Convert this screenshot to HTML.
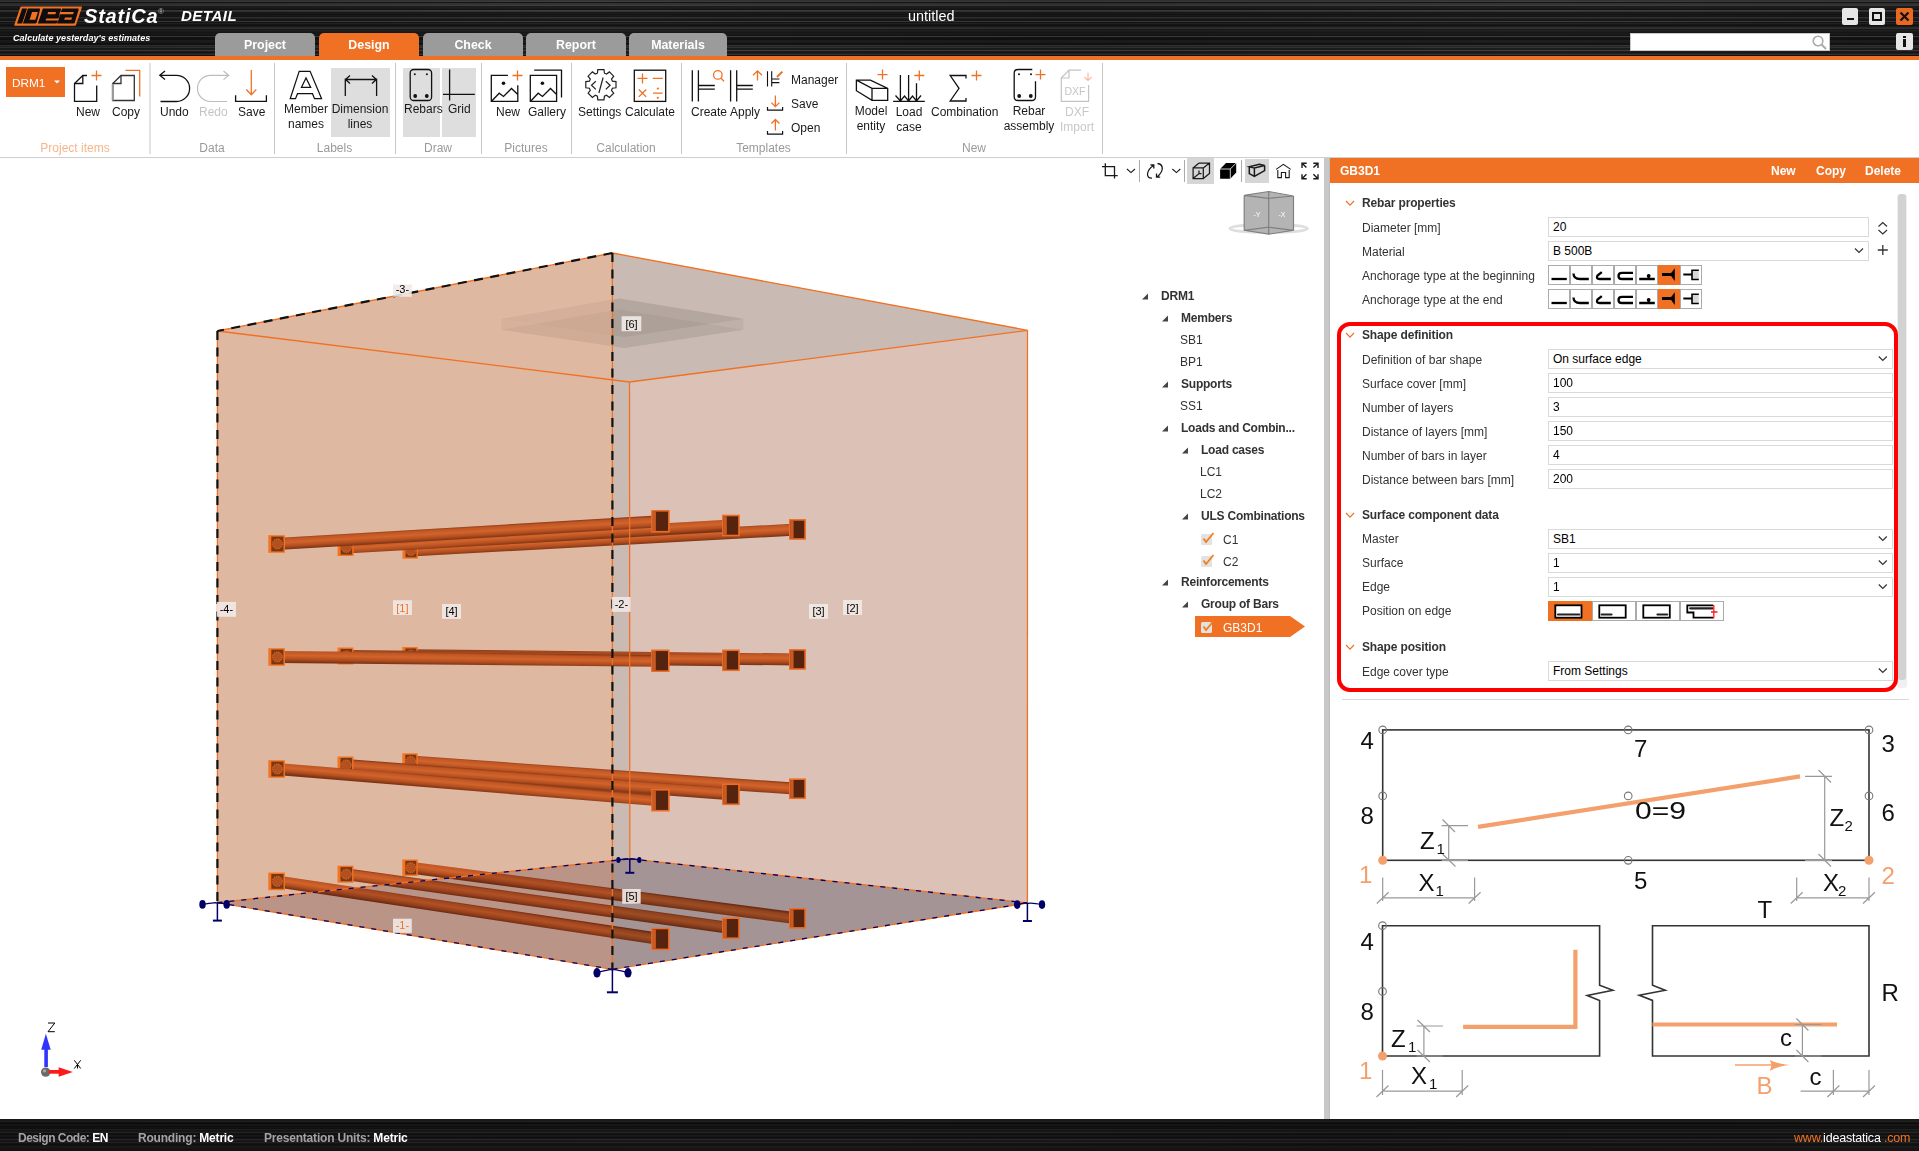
<!DOCTYPE html>
<html><head><meta charset="utf-8">
<style>
*{margin:0;padding:0;box-sizing:border-box}
html,body{width:1919px;height:1151px;overflow:hidden}
body{position:relative;background:#fff;font-family:"Liberation Sans",sans-serif;color:#000}
.a{position:absolute}
.brush{background-color:#1c1c1c}#title{background-image:linear-gradient(90deg,rgba(0,0,0,0.18),rgba(0,0,0,0) 30%,rgba(0,0,0,0.12) 55%,rgba(0,0,0,0) 80%,rgba(0,0,0,0.1)),linear-gradient(180deg,rgb(52,52,52) 0px,rgb(52,52,52) 1px,rgb(62,62,62) 1px,rgb(62,62,62) 2px,rgb(20,20,20) 2px,rgb(20,20,20) 3px,rgb(52,52,52) 3px,rgb(52,52,52) 4px,rgb(52,52,52) 4px,rgb(52,52,52) 5px,rgb(62,62,62) 5px,rgb(62,62,62) 6px,rgb(28,28,28) 6px,rgb(28,28,28) 7px,rgb(30,30,30) 7px,rgb(30,30,30) 8px,rgb(26,26,26) 8px,rgb(26,26,26) 9px,rgb(20,20,20) 9px,rgb(20,20,20) 10px,rgb(62,62,62) 10px,rgb(62,62,62) 11px,rgb(52,52,52) 11px,rgb(52,52,52) 12px,rgb(24,24,24) 12px,rgb(24,24,24) 13px,rgb(28,28,28) 13px,rgb(28,28,28) 14px,rgb(20,20,20) 14px,rgb(20,20,20) 15px,rgb(26,26,26) 15px,rgb(26,26,26) 16px,rgb(22,22,22) 16px,rgb(22,22,22) 17px,rgb(52,52,52) 17px,rgb(52,52,52) 18px,rgb(34,34,34) 18px,rgb(34,34,34) 19px,rgb(26,26,26) 19px,rgb(26,26,26) 20px,rgb(22,22,22) 20px,rgb(22,22,22) 21px,rgb(62,62,62) 21px,rgb(62,62,62) 22px,rgb(20,20,20) 22px,rgb(20,20,20) 23px,rgb(36,36,36) 23px,rgb(36,36,36) 24px,rgb(24,24,24) 24px,rgb(24,24,24) 25px,rgb(18,18,18) 25px,rgb(18,18,18) 26px,rgb(28,28,28) 26px,rgb(28,28,28) 27px,rgb(44,44,44) 27px,rgb(44,44,44) 28px,rgb(52,52,52) 28px,rgb(52,52,52) 29px,rgb(24,24,24) 29px,rgb(24,24,24) 30px,rgb(36,36,36) 30px,rgb(36,36,36) 31px,rgb(28,28,28) 31px,rgb(28,28,28) 32px,rgb(24,24,24) 32px,rgb(24,24,24) 33px,rgb(26,26,26) 33px,rgb(26,26,26) 34px,rgb(28,28,28) 34px,rgb(28,28,28) 35px,rgb(18,18,18) 35px,rgb(18,18,18) 36px,rgb(62,62,62) 36px,rgb(62,62,62) 37px,rgb(22,22,22) 37px,rgb(22,22,22) 38px,rgb(18,18,18) 38px,rgb(18,18,18) 39px,rgb(18,18,18) 39px,rgb(18,18,18) 40px,rgb(30,30,30) 40px,rgb(30,30,30) 41px,rgb(30,30,30) 41px,rgb(30,30,30) 42px,rgb(28,28,28) 42px,rgb(28,28,28) 43px,rgb(18,18,18) 43px,rgb(18,18,18) 44px,rgb(20,20,20) 44px,rgb(20,20,20) 45px,rgb(52,52,52) 45px,rgb(52,52,52) 46px,rgb(38,38,38) 46px,rgb(38,38,38) 47px,rgb(52,52,52) 47px,rgb(52,52,52) 48px,rgb(28,28,28) 48px,rgb(28,28,28) 49px,rgb(30,30,30) 49px,rgb(30,30,30) 50px,rgb(62,62,62) 50px,rgb(62,62,62) 51px,rgb(30,30,30) 51px,rgb(30,30,30) 52px,rgb(24,24,24) 52px,rgb(24,24,24) 53px,rgb(34,34,34) 53px,rgb(34,34,34) 54px,rgb(52,52,52) 54px,rgb(52,52,52) 55px,rgb(18,18,18) 55px,rgb(18,18,18) 56px)}#status{background-image:linear-gradient(90deg,rgba(0,0,0,0.1),rgba(0,0,0,0) 40%,rgba(0,0,0,0.1) 70%,rgba(0,0,0,0)),linear-gradient(180deg,rgb(26,26,26) 0px,rgb(26,26,26) 1px,rgb(28,28,28) 1px,rgb(28,28,28) 2px,rgb(32,32,32) 2px,rgb(32,32,32) 3px,rgb(18,18,18) 3px,rgb(18,18,18) 4px,rgb(12,12,12) 4px,rgb(12,12,12) 5px,rgb(22,22,22) 5px,rgb(22,22,22) 6px,rgb(24,24,24) 6px,rgb(24,24,24) 7px,rgb(12,12,12) 7px,rgb(12,12,12) 8px,rgb(20,20,20) 8px,rgb(20,20,20) 9px,rgb(16,16,16) 9px,rgb(16,16,16) 10px,rgb(32,32,32) 10px,rgb(32,32,32) 11px,rgb(22,22,22) 11px,rgb(22,22,22) 12px,rgb(24,24,24) 12px,rgb(24,24,24) 13px,rgb(38,38,38) 13px,rgb(38,38,38) 14px,rgb(18,18,18) 14px,rgb(18,18,18) 15px,rgb(16,16,16) 15px,rgb(16,16,16) 16px,rgb(26,26,26) 16px,rgb(26,26,26) 17px,rgb(24,24,24) 17px,rgb(24,24,24) 18px,rgb(12,12,12) 18px,rgb(12,12,12) 19px,rgb(24,24,24) 19px,rgb(24,24,24) 20px,rgb(38,38,38) 20px,rgb(38,38,38) 21px,rgb(28,28,28) 21px,rgb(28,28,28) 22px,rgb(20,20,20) 22px,rgb(20,20,20) 23px,rgb(38,38,38) 23px,rgb(38,38,38) 24px,rgb(20,20,20) 24px,rgb(20,20,20) 25px,rgb(16,16,16) 25px,rgb(16,16,16) 26px,rgb(20,20,20) 26px,rgb(20,20,20) 27px,rgb(26,26,26) 27px,rgb(26,26,26) 28px,rgb(26,26,26) 28px,rgb(26,26,26) 29px,rgb(22,22,22) 29px,rgb(22,22,22) 30px,rgb(20,20,20) 30px,rgb(20,20,20) 31px,rgb(20,20,20) 31px,rgb(20,20,20) 32px)}
#title{left:0;top:0;width:1919px;height:56px}
#obar{left:0;top:56px;width:1919px;height:4px;background:#f07124}
#ribbon{left:0;top:60px;width:1919px;height:97px;background:#fff}
#rbline{left:0;top:157px;width:1919px;height:1px;background:#cfcfcf}
#split{left:1324px;top:158px;width:6px;height:961px;background:#c8c8c8;border-right:1px solid #bdbdbd}
#status{left:0;top:1119px;width:1919px;height:32px}
.tab{top:33px;height:23px;width:100px;background:#9b9b9b;border-radius:5px 5px 0 0;color:#fff;font-weight:bold;font-size:12.4px;text-align:center;line-height:24px}
.rl{font-size:12px;color:#1a1a1a;white-space:nowrap;text-align:center;line-height:15px}
.gl{font-size:12px;color:#9a9a9a;white-space:nowrap;text-align:center;top:141px}
.sep{width:1px;background:#d0d0d0;top:63px;height:91px}
.pl{font-size:12px;color:#333;white-space:nowrap;left:1362px;line-height:14px}
.ph{font-size:12px;font-weight:bold;color:#333;white-space:nowrap;left:1362px;line-height:14px;letter-spacing:-0.15px}
.fld{left:1548px;height:20px;border:1px solid #d9d9d9;background:#fff;font-size:12px;color:#000;padding-left:4px;line-height:19px;white-space:nowrap}
.tr{font-size:12px;color:#333;white-space:nowrap;line-height:14px}
.trb{font-weight:bold;letter-spacing:-0.22px}
</style></head>
<body>
<div id="title" class="a brush"></div>
<div id="obar" class="a"></div>
<div id="ribbon" class="a"></div>
<div id="rbline" class="a"></div>
<div id="split" class="a"></div>
<div id="status" class="a brush"></div>
<svg class="a" style="left:0;top:0" width="90" height="30" viewBox="0 0 90 30">
<path d="M21.8 6.5 H81.3 Q82.2 6.5 81.9 7.4 L76 25 Q75.8 25.7 75 25.7 H14.9 Q14 25.7 14.3 24.8 L20.3 7.2 Q20.6 6.5 21.8 6.5 Z" fill="#f07124"/>
<g fill="#0d0d0d">
<path d="M22.1 8.6 H27.1 L22.1 23.4 H17.1 Z"/>
<path d="M27.9 8.6 H39.2 Q40.4 8.6 40 9.8 L36.9 22 Q36.5 23.4 35.2 23.4 H22.9 Z"/>
<path d="M42.9 8.6 H60.2 Q61.3 8.6 61 9.7 L57.4 22.2 Q57 23.4 55.8 23.4 H37.9 Z"/>
<path d="M62.1 8.6 H77.8 Q78.9 8.6 78.6 9.7 L74.9 22.2 Q74.5 23.4 73.3 23.4 H57.1 Z"/>
</g>
<g fill="#f07124">
<path d="M32.1 12.1 H37.9 L35.4 19.8 H29.6 Z"/>
<path d="M48.1 12.1 H56 L55.4 14.2 H47.5 Z"/>
<path d="M46.3 18.4 H59 L58.3 20.5 H45.6 Z"/>
<path d="M60 12.1 H73.8 L73.1 14.2 H59.3 Z"/>
<path d="M65 17.5 H72.1 L71.3 19.8 H64.2 Z"/>
</g>
</svg>
<div class="a" style="left:84px;top:4px;font-size:20px;font-weight:bold;font-style:italic;color:#fff;letter-spacing:0.8px;line-height:24px">StatiCa</div>
<div class="a" style="left:158px;top:8px;font-size:8px;color:#bbb;line-height:8px">&#174;</div>
<div class="a" style="left:181px;top:7px;font-size:15px;font-style:italic;font-weight:bold;color:#fff;line-height:18px;letter-spacing:0.5px">DETAIL</div>
<div class="a" style="left:13px;top:32px;font-size:9px;font-style:italic;font-weight:bold;color:#fff;line-height:12px;letter-spacing:0.05px">Calculate yesterday's estimates</div>
<div class="a" style="left:908px;top:8px;font-size:14.4px;color:#fff;line-height:17px">untitled</div>
<div class="a tab" style="left:215px">Project</div>
<div class="a tab" style="left:319px;background:#f07124">Design</div>
<div class="a tab" style="left:423px">Check</div>
<div class="a tab" style="left:526px">Report</div>
<div class="a tab" style="left:629px;width:98px">Materials</div>
<!-- window buttons -->
<div class="a" style="left:1842px;top:8px;width:16px;height:17px;background:#e6e6e6;border-radius:2px"></div>
<div class="a" style="left:1847px;top:18px;width:7px;height:2px;background:#111"></div>
<div class="a" style="left:1869px;top:8px;width:16px;height:17px;background:#e6e6e6;border-radius:2px"></div>
<div class="a" style="left:1872px;top:12px;width:10px;height:9px;border:2px solid #111"></div>
<div class="a" style="left:1896px;top:8px;width:17px;height:17px;background:#e8691f;border-radius:2px"></div>
<svg class="a" style="left:1896px;top:8px" width="17" height="17"><path d="M4.5 4.5 L12.5 12.5 M12.5 4.5 L4.5 12.5" stroke="#111" stroke-width="2.2"/></svg>
<div class="a" style="left:1630px;top:33px;width:200px;height:18px;background:#fff;border:1px solid #c8c8c8"></div>
<svg class="a" style="left:1811px;top:34px" width="18" height="17"><circle cx="7" cy="7" r="4.8" fill="none" stroke="#aaa" stroke-width="1.6"/><path d="M10.5 10.5 L15 15" stroke="#aaa" stroke-width="2"/></svg>
<div class="a" style="left:1896px;top:33px;width:17px;height:17px;background:#e6e6e6;border-radius:2px"></div>
<div class="a" style="left:1903px;top:36px;width:3px;height:2px;background:#111"></div>
<div class="a" style="left:1903px;top:39px;width:3px;height:8px;background:#111"></div>
<div class="a" style="left:331px;top:68px;width:59px;height:69px;background:#dedede"></div>
<div class="a" style="left:403px;top:68px;width:37px;height:69px;background:#dedede"></div>
<div class="a" style="left:442px;top:68px;width:34px;height:69px;background:#dedede"></div>
<div class="a" style="left:6px;top:67px;width:59px;height:30px;background:#f07124"></div>
<div class="a" style="left:12px;top:76px;font-size:11.8px;color:#fff;line-height:14px">DRM1</div>
<svg class="a" style="left:0;top:0" width="1110" height="160">
<g fill="none" stroke="#111" stroke-width="1.3">
<path d="M87 75.5 H82.8 L74.5 83.5 V101.4 H96.7 V85.5"/>
<path d="M82.8 75.5 V83.5 H74.5"/>
<path d="M112.8 83.5 L121 75.5 H134.3 V100.5 H112.8 Z" stroke="#333"/>
<path d="M121 75.5 V83.5 H112.8" stroke="#333"/>
<path d="M165 71 L159.8 75.3 L165 79.6 M159.8 75.3 H176.5 A13.1 13.1 0 0 1 176.5 101.5 H160.5"/>
<path d="M235.6 95.2 V101.4 H266.4 V95.2"/>
<path d="M290.2 98.7 L299.2 71.3 H310.1 L321.6 98.7 H314.5 L312.5 93.7 H297.5 L295.5 98.7 Z M301.4 87.4 L306 77.9 L310.7 87.4 Z" stroke-width="1.2"/>
<path d="M345.3 78.4 V95.9 M376.6 78.4 V95.9 M345.3 79.5 H376.6 M350 75.5 L345.5 79.5 L350 83.5 M372 75.5 L376.4 79.5 L372 83.5"/>
<rect x="410.2" y="69.5" width="21.4" height="31" rx="3.5"/>
<path d="M449.6 69.4 V100.5 M443 94.3 H474.8"/>
<path d="M507.9 75.4 H491.3 V101.4 H517.8 V85.2 M491.8 101 L499.2 93.2 L503.5 96.5 L511.5 88.5 L517.8 94.5"/>
<path d="M530.3 75.4 H556.6 V101.4 H530.3 Z M534.2 70.2 H561.5 V97.6 M530.8 101 L538.2 93.2 L542.5 96.5 L550.5 88.5 L556.6 94.5"/>
<rect x="634.3" y="70.2" width="31.4" height="31.2"/>
<path d="M692.3 70.2 V101.4 M698.4 70.2 V101.4 M698.4 85.5 H714.8 M698.4 89.1 H714.8"/>
<path d="M730.6 70.2 V101.4 M736.7 70.2 V101.4 M736.7 85.5 H752.8 M736.7 89.1 H752.8"/>
<path d="M767.5 71.3 V86.6 M771.7 71.3 V86.6 M771.7 79 H779.4 M771.7 82.6 H779.4" stroke-width="1.1"/>
<path d="M767.5 107 V110.2 H782.6 V107 M767.5 131 V134.2 H782.6 V131" stroke-width="1.2"/>
<path d="M856.4 80.1 H870.4 L887.7 88.3 V100.3 H872 L856.4 90.7 Z M856.4 80.1 L872 88.3 H887.7 M872 88.3 V100.3"/>
<path d="M893.1 101.4 H924.8 M900.4 75.1 V101 M908.6 75.1 V101 M916.5 83.3 V101 M895.5 95.5 L900.4 101 L904.5 96 L908.6 101 L912.5 96 L916.5 101 L921 95.5"/>
<path d="M966 78.5 V75.5 H950.2 L959 88.3 L950.2 101 H966 V98"/>
<path d="M1032.3 69.5 H1018 Q1014.2 69.5 1014.2 73.3 V96.7 Q1014.2 100.5 1018 100.5 H1031.7 Q1035.5 100.5 1035.5 96.7 V81.2"/>
</g>
<path d="M197.5 88.4 A13.1 13.1 0 0 1 210.5 75.3 H228.5 M223.5 71 L228.7 75.3 L223.5 79.6 M197.5 88.4 A13.1 13.1 0 0 0 210.5 101.5 H227" fill="none" stroke="#bdbdbd" stroke-width="1.2"/>
<path d="M112.8 84 V100.5" stroke="#999" stroke-width="2.2"/>
<g fill="#111"><circle cx="414.8" cy="74.3" r="1"/><circle cx="426.9" cy="74.3" r="1"/><circle cx="415.2" cy="96" r="1.9"/><circle cx="426.8" cy="96" r="1.9"/>
<circle cx="503.5" cy="83.3" r="1.8"/><circle cx="542.4" cy="83.3" r="1.8"/>
<circle cx="1019" cy="74.2" r="1"/><circle cx="1031" cy="74.2" r="1"/><circle cx="1019.2" cy="96" r="1.9"/><circle cx="1030.8" cy="96" r="1.9"/></g>
<g fill="none" stroke="#f07124" stroke-width="1.3">
<path d="M96.5 70.5 V80.5 M91.5 75.5 H101.5"/>
<path d="M125.4 70.3 H139.7 V96.4"/>
<path d="M251.3 70 V94.5 M246.3 89.5 L251.3 94.7 L256.3 89.5"/>
<path d="M517.5 70.5 V80.5 M512.5 75.5 H522.5"/>
<path d="M637.5 78.4 H647.5 M642.5 73.4 V83.4 M652.8 78.4 H662.8 M638.8 89.5 L646.2 96.9 M646.2 89.5 L638.8 96.9 M653 93.2 H662.6"/>
<circle cx="717.8" cy="74.9" r="4.3"/><path d="M720.8 78 L724 81.2"/>
<path d="M757.5 70.8 V80.6 M753 75.3 L757.5 70.8 L762 75.3"/>
<path d="M777 77 L782.3 71.6" stroke-width="2"/>
<path d="M775.4 95.4 V106.6 M771.4 102.6 L775.4 106.6 L779.4 102.6 M775.4 119.5 V130.5 M771.4 123.5 L775.4 119.5 L779.4 123.5"/>
<path d="M882.5 69.6 V79.6 M877.5 74.6 H887.5"/>
<path d="M919.3 70.5 V80.5 M914.3 75.5 H924.3"/>
<path d="M976.5 70.5 V80.5 M971.5 75.5 H981.5"/>
<path d="M1040.5 69.6 V79.6 M1035.5 74.6 H1045.5"/>
</g>
<g fill="#f07124"><circle cx="657.8" cy="88.6" r="1.1"/><circle cx="657.8" cy="97.8" r="1.1"/></g>
<path d="M1061.3 78 L1069 70.2 H1081 M1069 70.2 V78 H1061.3 V101.4 H1088.6 V85" fill="none" stroke="#c4c4c4" stroke-width="1.2"/>
<path d="M1088 72.5 V80.5 M1084.5 77 L1088 80.5 L1091.5 77" fill="none" stroke="#f7b998" stroke-width="1.1"/>
<text x="1064.5" y="94.5" font-family="Liberation Sans" font-size="11" fill="#c4c4c4" textLength="21" lengthAdjust="spacingAndGlyphs">DXF</text>
<g fill="none" stroke="#222" stroke-width="1.2">
<path d="M597.4 73.2 L597.8 69.6 L604.0 69.6 L604.4 73.2 L606.5 74.1 L609.4 71.9 L613.7 76.2 L611.5 79.1 L612.4 81.2 L616.0 81.6 L616.0 87.8 L612.4 88.2 L611.5 90.3 L613.7 93.2 L609.4 97.5 L606.5 95.3 L604.4 96.2 L604.0 99.8 L597.8 99.8 L597.4 96.2 L595.3 95.3 L592.4 97.5 L588.1 93.2 L590.3 90.3 L589.4 88.2 L585.8 87.8 L585.8 81.6 L589.4 81.2 L590.3 79.1 L588.1 76.2 L592.4 71.9 L595.3 74.1 Z"/>
<path d="M595.8 81.2 L591.5 85.3 L595.8 89.4 M605.8 81.2 L610.1 85.3 L605.8 89.4 M603.1 77.5 L598.9 93"/>
</g>
<g fill="#c6c6c6"><rect x="149.5" y="63" width="1" height="91"/><rect x="274" y="63" width="1" height="91"/><rect x="395" y="63" width="1" height="91"/><rect x="481" y="63" width="1" height="91"/><rect x="571" y="63" width="1" height="91"/><rect x="681" y="63" width="1" height="91"/><rect x="846" y="63" width="1" height="91"/><rect x="1102" y="63" width="1" height="91"/></g>
<path d="M54 80.5 L60 80.5 L57 83.5 Z" fill="#fff"/>
</svg>
<div class="a rl" style="left:76px;top:105px">New</div>
<div class="a rl" style="left:112px;top:105px">Copy</div>
<div class="a rl" style="left:160px;top:105px">Undo</div>
<div class="a rl" style="left:199px;top:105px;color:#c4c4c4">Redo</div>
<div class="a rl" style="left:238px;top:105px">Save</div>
<div class="a rl" style="left:276px;top:102px;width:60px">Member<br>names</div>
<div class="a rl" style="left:330px;top:102px;width:60px">Dimension<br>lines</div>
<div class="a rl" style="left:404px;top:102px">Rebars</div>
<div class="a rl" style="left:448px;top:102px">Grid</div>
<div class="a rl" style="left:496px;top:105px">New</div>
<div class="a rl" style="left:528px;top:105px">Gallery</div>
<div class="a rl" style="left:578px;top:105px">Settings</div>
<div class="a rl" style="left:625px;top:105px">Calculate</div>
<div class="a rl" style="left:691px;top:105px">Create</div>
<div class="a rl" style="left:730px;top:105px">Apply</div>
<div class="a rl" style="left:791px;top:73px">Manager</div>
<div class="a rl" style="left:791px;top:97px">Save</div>
<div class="a rl" style="left:791px;top:121px">Open</div>
<div class="a rl" style="left:846px;top:104px;width:50px">Model<br>entity</div>
<div class="a rl" style="left:889px;top:105px;width:40px">Load<br>case</div>
<div class="a rl" style="left:931px;top:105px">Combination</div>
<div class="a rl" style="left:999px;top:104px;width:60px">Rebar<br>assembly</div>
<div class="a rl" style="left:1057px;top:105px;width:40px;color:#c8c8c8">DXF<br>Import</div>
<div class="a gl" style="left:0;width:150px;color:#f5b58c">Project items</div>
<div class="a gl" style="left:150px;width:124px">Data</div>
<div class="a gl" style="left:274px;width:121px">Labels</div>
<div class="a gl" style="left:395px;width:86px">Draw</div>
<div class="a gl" style="left:481px;width:90px">Pictures</div>
<div class="a gl" style="left:571px;width:110px">Calculation</div>
<div class="a gl" style="left:681px;width:165px">Templates</div>
<div class="a gl" style="left:846px;width:256px">New</div>
<!--VIEW--><svg class="a" style="left:0;top:158px" width="1324" height="961" viewBox="0 158 1324 961">
<defs>
<linearGradient id="g0" gradientUnits="userSpaceOnUse" x1="468.9" y1="538.8" x2="468.2" y2="526.5">
<stop offset="0" stop-color="#7c3414"/><stop offset="0.25" stop-color="#b24e20"/><stop offset="0.55" stop-color="#d2642b"/><stop offset="0.85" stop-color="#c05624"/><stop offset="1" stop-color="#8c3c18"/></linearGradient>
<linearGradient id="g1" gradientUnits="userSpaceOnUse" x1="538.7" y1="542.7" x2="537.9" y2="530.3">
<stop offset="0" stop-color="#7c3414"/><stop offset="0.25" stop-color="#b24e20"/><stop offset="0.55" stop-color="#d2642b"/><stop offset="0.85" stop-color="#c05624"/><stop offset="1" stop-color="#8c3c18"/></linearGradient>
<linearGradient id="g2" gradientUnits="userSpaceOnUse" x1="604.2" y1="546.2" x2="603.5" y2="533.8">
<stop offset="0" stop-color="#7c3414"/><stop offset="0.25" stop-color="#b24e20"/><stop offset="0.55" stop-color="#d2642b"/><stop offset="0.85" stop-color="#c05624"/><stop offset="1" stop-color="#8c3c18"/></linearGradient>
<linearGradient id="g3" gradientUnits="userSpaceOnUse" x1="468.4" y1="665.1" x2="468.6" y2="652.7">
<stop offset="0" stop-color="#7c3414"/><stop offset="0.25" stop-color="#b24e20"/><stop offset="0.55" stop-color="#d2642b"/><stop offset="0.85" stop-color="#c05624"/><stop offset="1" stop-color="#8c3c18"/></linearGradient>
<linearGradient id="g4" gradientUnits="userSpaceOnUse" x1="538.2" y1="664.3" x2="538.3" y2="652.0">
<stop offset="0" stop-color="#7c3414"/><stop offset="0.25" stop-color="#b24e20"/><stop offset="0.55" stop-color="#d2642b"/><stop offset="0.85" stop-color="#c05624"/><stop offset="1" stop-color="#8c3c18"/></linearGradient>
<linearGradient id="g5" gradientUnits="userSpaceOnUse" x1="603.7" y1="663.5" x2="603.8" y2="651.2">
<stop offset="0" stop-color="#7c3414"/><stop offset="0.25" stop-color="#b24e20"/><stop offset="0.55" stop-color="#d2642b"/><stop offset="0.85" stop-color="#c05624"/><stop offset="1" stop-color="#8c3c18"/></linearGradient>
<linearGradient id="g6" gradientUnits="userSpaceOnUse" x1="468.0" y1="790.8" x2="469.1" y2="778.5">
<stop offset="0" stop-color="#7c3414"/><stop offset="0.25" stop-color="#b24e20"/><stop offset="0.55" stop-color="#d2642b"/><stop offset="0.85" stop-color="#c05624"/><stop offset="1" stop-color="#8c3c18"/></linearGradient>
<linearGradient id="g7" gradientUnits="userSpaceOnUse" x1="537.8" y1="785.8" x2="538.7" y2="773.5">
<stop offset="0" stop-color="#7c3414"/><stop offset="0.25" stop-color="#b24e20"/><stop offset="0.55" stop-color="#d2642b"/><stop offset="0.85" stop-color="#c05624"/><stop offset="1" stop-color="#8c3c18"/></linearGradient>
<linearGradient id="g8" gradientUnits="userSpaceOnUse" x1="603.3" y1="781.3" x2="604.2" y2="769.0">
<stop offset="0" stop-color="#7c3414"/><stop offset="0.25" stop-color="#b24e20"/><stop offset="0.55" stop-color="#d2642b"/><stop offset="0.85" stop-color="#c05624"/><stop offset="1" stop-color="#8c3c18"/></linearGradient>
<linearGradient id="g9" gradientUnits="userSpaceOnUse" x1="467.6" y1="916.3" x2="469.5" y2="904.1">
<stop offset="0" stop-color="#7c3414"/><stop offset="0.25" stop-color="#b24e20"/><stop offset="0.55" stop-color="#d2642b"/><stop offset="0.85" stop-color="#c05624"/><stop offset="1" stop-color="#8c3c18"/></linearGradient>
<linearGradient id="g10" gradientUnits="userSpaceOnUse" x1="537.4" y1="907.3" x2="539.1" y2="895.1">
<stop offset="0" stop-color="#7c3414"/><stop offset="0.25" stop-color="#b24e20"/><stop offset="0.55" stop-color="#d2642b"/><stop offset="0.85" stop-color="#c05624"/><stop offset="1" stop-color="#8c3c18"/></linearGradient>
<linearGradient id="g11" gradientUnits="userSpaceOnUse" x1="602.9" y1="899.2" x2="604.6" y2="886.9">
<stop offset="0" stop-color="#7c3414"/><stop offset="0.25" stop-color="#b24e20"/><stop offset="0.55" stop-color="#d2642b"/><stop offset="0.85" stop-color="#c05624"/><stop offset="1" stop-color="#8c3c18"/></linearGradient>
</defs>
<polygon points="217.4,331.0 612.4,253.0 612.4,969.3 217.4,902.6" fill="#dfb8a1"/>
<polygon points="612.4,253.0 1027.5,330.3 629.5,382.0 629.8,858.8 612.4,860.6" fill="#c9bbb3"/>
<polygon points="629.5,382.0 1027.5,330.3 1027.4,903.0 612.4,969.3 612.4,860.6 629.8,858.8" fill="#dcc1b6"/>
<clipPath id="cL"><rect x="0" y="158" width="612.4" height="961"/></clipPath><clipPath id="cR"><rect x="612.4" y="158" width="700" height="961"/></clipPath>
<g clip-path="url(#cL)"><polygon points="501.3,318.8 619.4,298.4 743.3,318.8 624.4,337.0" fill="rgba(90,60,50,0.07)"/><polygon points="501.3,329.8 619.4,309.4 743.3,329.8 624.4,348.0" fill="rgba(90,60,50,0.06)"/><polygon points="501.3,318.8 501.3,329.8 624.4,348.0 743.3,329.8 743.3,318.8 624.4,337.0" fill="rgba(90,60,50,0.05)"/></g>
<g clip-path="url(#cR)"><polygon points="501.3,318.8 619.4,298.4 743.3,318.8 624.4,337.0" fill="rgba(60,55,55,0.15)"/><polygon points="501.3,329.8 619.4,309.4 743.3,329.8 624.4,348.0" fill="rgba(60,55,55,0.06)"/><polygon points="501.3,318.8 501.3,329.8 624.4,348.0 743.3,329.8 743.3,318.8 624.4,337.0" fill="rgba(60,55,55,0.07)"/></g>
<polygon points="410.5,556.5 797.8,535.5 797.2,523.5 409.9,544.5" fill="url(#g2)"/>
<rect x="402.5" y="542.3" width="15.4" height="16.4" fill="#f47424"/><rect x="405.5" y="543.7" width="11.0" height="13.6" fill="#7a3812"/><circle cx="411.0" cy="550.5" r="5.0" fill="#b4501f" stroke="#f07a2a" stroke-width="0.9" stroke-dasharray="1.2 1.2"/>
<polygon points="345.9,553.5 731.3,531.5 730.7,519.5 345.3,541.5" fill="url(#g1)"/>
<rect x="337.6" y="539.0" width="16.0" height="17.0" fill="#f47424"/><rect x="340.6" y="540.4" width="11.6" height="14.2" fill="#7a3812"/><circle cx="346.4" cy="547.5" r="5.0" fill="#b4501f" stroke="#f07a2a" stroke-width="0.9" stroke-dasharray="1.2 1.2"/>
<polygon points="277.0,550.0 660.9,527.3 660.1,515.3 276.2,538.0" fill="url(#g0)"/>
<rect x="268.3" y="535.2" width="16.6" height="17.6" fill="#f47424"/><rect x="271.3" y="536.6" width="12.2" height="14.8" fill="#7a3812"/><circle cx="277.4" cy="544.0" r="5.0" fill="#b4501f" stroke="#f07a2a" stroke-width="0.9" stroke-dasharray="1.2 1.2"/>
<rect x="789.8" y="519.9" width="15.3" height="19.1" fill="#55230e" stroke="#ee6d26" stroke-width="1.6"/><rect x="790.6" y="520.8" width="3" height="17.5" fill="#c85a24"/>
<rect x="722.9" y="515.5" width="16.1" height="20.0" fill="#55230e" stroke="#ee6d26" stroke-width="1.6"/><rect x="723.8" y="516.3" width="3" height="18.4" fill="#c85a24"/>
<rect x="652.0" y="510.8" width="16.9" height="20.9" fill="#55230e" stroke="#ee6d26" stroke-width="1.6"/><rect x="652.9" y="511.6" width="3" height="19.3" fill="#c85a24"/>
<polygon points="409.9,661.2 797.4,665.5 797.6,653.5 410.1,649.2" fill="url(#g5)"/>
<rect x="402.3" y="647.0" width="15.4" height="16.4" fill="#f47424"/><rect x="405.3" y="648.4" width="11.0" height="13.6" fill="#7a3812"/><circle cx="410.8" cy="655.2" r="5.0" fill="#b4501f" stroke="#f07a2a" stroke-width="0.9" stroke-dasharray="1.2 1.2"/>
<polygon points="345.4,662.0 730.9,666.3 731.1,654.3 345.6,650.0" fill="url(#g4)"/>
<rect x="337.5" y="647.5" width="16.0" height="17.0" fill="#f47424"/><rect x="340.5" y="648.9" width="11.6" height="14.2" fill="#7a3812"/><circle cx="346.3" cy="656.0" r="5.0" fill="#b4501f" stroke="#f07a2a" stroke-width="0.9" stroke-dasharray="1.2 1.2"/>
<polygon points="276.5,663.0 660.3,666.8 660.5,654.8 276.7,651.0" fill="url(#g3)"/>
<rect x="268.3" y="648.2" width="16.6" height="17.6" fill="#f47424"/><rect x="271.3" y="649.6" width="12.2" height="14.8" fill="#7a3812"/><circle cx="277.4" cy="657.0" r="5.0" fill="#b4501f" stroke="#f07a2a" stroke-width="0.9" stroke-dasharray="1.2 1.2"/>
<rect x="789.8" y="649.9" width="15.3" height="19.1" fill="#55230e" stroke="#ee6d26" stroke-width="1.6"/><rect x="790.6" y="650.8" width="3" height="17.5" fill="#c85a24"/>
<rect x="722.9" y="650.3" width="16.1" height="20.0" fill="#55230e" stroke="#ee6d26" stroke-width="1.6"/><rect x="723.8" y="651.1" width="3" height="18.4" fill="#c85a24"/>
<rect x="651.9" y="650.3" width="16.9" height="20.9" fill="#55230e" stroke="#ee6d26" stroke-width="1.6"/><rect x="652.8" y="651.1" width="3" height="19.3" fill="#c85a24"/>
<polygon points="409.6,767.5 797.1,794.8 797.9,782.8 410.4,755.5" fill="url(#g8)"/>
<rect x="402.3" y="753.3" width="15.4" height="16.4" fill="#f47424"/><rect x="405.3" y="754.7" width="11.0" height="13.6" fill="#7a3812"/><circle cx="410.8" cy="761.5" r="5.0" fill="#b4501f" stroke="#f07a2a" stroke-width="0.9" stroke-dasharray="1.2 1.2"/>
<polygon points="345.0,771.0 730.5,800.3 731.5,788.3 346.0,759.0" fill="url(#g7)"/>
<rect x="337.5" y="756.5" width="16.0" height="17.0" fill="#f47424"/><rect x="340.5" y="757.9" width="11.6" height="14.2" fill="#7a3812"/><circle cx="346.3" cy="765.0" r="5.0" fill="#b4501f" stroke="#f07a2a" stroke-width="0.9" stroke-dasharray="1.2 1.2"/>
<polygon points="276.1,775.0 660.0,806.3 661.0,794.3 277.1,763.0" fill="url(#g6)"/>
<rect x="268.3" y="760.2" width="16.6" height="17.6" fill="#f47424"/><rect x="271.3" y="761.6" width="12.2" height="14.8" fill="#7a3812"/><circle cx="277.4" cy="769.0" r="5.0" fill="#b4501f" stroke="#f07a2a" stroke-width="0.9" stroke-dasharray="1.2 1.2"/>
<rect x="789.8" y="779.2" width="15.3" height="19.1" fill="#55230e" stroke="#ee6d26" stroke-width="1.6"/><rect x="790.6" y="780.0" width="3" height="17.5" fill="#c85a24"/>
<rect x="722.9" y="784.3" width="16.1" height="20.0" fill="#55230e" stroke="#ee6d26" stroke-width="1.6"/><rect x="723.8" y="785.1" width="3" height="18.4" fill="#c85a24"/>
<rect x="652.0" y="789.8" width="16.9" height="20.9" fill="#55230e" stroke="#ee6d26" stroke-width="1.6"/><rect x="652.9" y="790.6" width="3" height="19.3" fill="#c85a24"/>
<polygon points="409.2,873.6 796.7,924.3 798.3,912.5 410.8,861.8" fill="url(#g11)"/>
<polygon points="344.7,880.1 730.2,934.1 731.8,922.3 346.3,868.3" fill="url(#g10)"/>
<polygon points="275.7,887.3 659.6,944.9 661.4,933.1 277.5,875.5" fill="url(#g9)"/>
<polygon points="217.4,902.6 612.4,860.6 612.4,969.3" fill="#d6cdd8" style="mix-blend-mode:multiply"/>
<polygon points="612.4,860.6 629.8,858.8 1027.4,903.0 612.4,969.3" fill="#bfc3d2" style="mix-blend-mode:multiply"/>
<rect x="402.3" y="859.5" width="15.4" height="16.4" fill="#f47424"/><rect x="405.3" y="860.9" width="11.0" height="13.6" fill="#7a3812"/><circle cx="410.8" cy="867.7" r="5.0" fill="#b4501f" stroke="#f07a2a" stroke-width="0.9" stroke-dasharray="1.2 1.2"/>
<rect x="337.5" y="865.7" width="16.0" height="17.0" fill="#f47424"/><rect x="340.5" y="867.1" width="11.6" height="14.2" fill="#7a3812"/><circle cx="346.3" cy="874.2" r="5.0" fill="#b4501f" stroke="#f07a2a" stroke-width="0.9" stroke-dasharray="1.2 1.2"/>
<rect x="268.3" y="872.6" width="16.6" height="17.6" fill="#f47424"/><rect x="271.3" y="874.0" width="12.2" height="14.8" fill="#7a3812"/><circle cx="277.4" cy="881.4" r="5.0" fill="#b4501f" stroke="#f07a2a" stroke-width="0.9" stroke-dasharray="1.2 1.2"/>
<rect x="789.8" y="908.8" width="15.3" height="19.1" fill="#55230e" stroke="#ee6d26" stroke-width="1.6"/><rect x="790.6" y="909.6" width="3" height="17.5" fill="#c85a24"/>
<rect x="722.9" y="918.2" width="16.1" height="20.0" fill="#55230e" stroke="#ee6d26" stroke-width="1.6"/><rect x="723.8" y="919.0" width="3" height="18.4" fill="#c85a24"/>
<rect x="652.0" y="928.5" width="16.9" height="20.9" fill="#55230e" stroke="#ee6d26" stroke-width="1.6"/><rect x="652.9" y="929.4" width="3" height="19.3" fill="#c85a24"/>
<g fill="none" stroke="#f07124" stroke-width="1.3">
<line x1="217.4" y1="331.0" x2="612.4" y2="253.0"/>
<line x1="612.4" y1="253.0" x2="1027.5" y2="330.3"/>
<line x1="217.4" y1="331.0" x2="629.5" y2="382.0"/>
<line x1="629.5" y1="382.0" x2="1027.5" y2="330.3"/>
<line x1="217.4" y1="331.0" x2="217.4" y2="902.6"/>
<line x1="612.4" y1="253.0" x2="612.4" y2="969.3"/>
<line x1="1027.5" y1="330.3" x2="1027.4" y2="903.0"/>
<line x1="629.5" y1="382.0" x2="629.8" y2="858.8"/>
<line x1="217.4" y1="902.6" x2="612.4" y2="969.3"/>
<line x1="612.4" y1="969.3" x2="1027.4" y2="903.0"/>
<line x1="217.4" y1="902.6" x2="629.8" y2="858.8"/>
<line x1="629.8" y1="858.8" x2="1027.4" y2="903.0"/>
</g>
<g fill="none" stroke="#111" stroke-width="2.2" stroke-dasharray="9 7.5">
<line x1="612.4" y1="253.0" x2="217.4" y2="331.0"/>
<line x1="612.4" y1="253.0" x2="612.4" y2="969.3"/>
<line x1="217.4" y1="331.0" x2="217.4" y2="902.6"/>
</g>
<g fill="none" stroke="#000066" stroke-width="1.3" stroke-dasharray="5 7">
<line x1="217.4" y1="902.6" x2="612.4" y2="969.3"/>
<line x1="612.4" y1="969.3" x2="1027.4" y2="903.0"/>
<line x1="217.4" y1="902.6" x2="629.8" y2="858.8"/>
<line x1="629.8" y1="858.8" x2="1027.4" y2="903.0"/>
</g>
<g fill="#000066" stroke="#000066"><line x1="217.4" y1="902.6" x2="217.4" y2="920.6" stroke-width="1.5"/><line x1="212.9" y1="920.6" x2="221.9" y2="920.6" stroke-width="2"/><path d="M202.5 904.4 Q217.4 901.6 217.4 903.6" fill="none" stroke-width="1.3"/><path d="M226.7 904.4 Q217.4 901.6 217.4 903.6" fill="none" stroke-width="1.3"/><ellipse cx="202.5" cy="904.4" rx="3.2" ry="4.3" stroke="none"/><ellipse cx="226.7" cy="904.4" rx="3.2" ry="4.3" stroke="none"/></g>
<g fill="#000066" stroke="#000066"><line x1="612.4" y1="969.3" x2="612.4" y2="992.3" stroke-width="1.5"/><line x1="606.9" y1="992.3" x2="617.9" y2="992.3" stroke-width="2"/><path d="M597.0 972.8 Q612.4 968.3 612.4 970.3" fill="none" stroke-width="1.3"/><path d="M628.0 972.8 Q612.4 968.3 612.4 970.3" fill="none" stroke-width="1.3"/><ellipse cx="597.0" cy="972.8" rx="3.6" ry="4.8" stroke="none"/><ellipse cx="628.0" cy="972.8" rx="3.6" ry="4.8" stroke="none"/></g>
<g fill="#000066" stroke="#000066"><line x1="1027.4" y1="903.0" x2="1027.4" y2="921.0" stroke-width="1.5"/><line x1="1022.9" y1="921.0" x2="1031.9" y2="921.0" stroke-width="2"/><path d="M1017.2 904.6 Q1027.4 902.0 1027.4 904.0" fill="none" stroke-width="1.3"/><path d="M1042.0 904.6 Q1027.4 902.0 1027.4 904.0" fill="none" stroke-width="1.3"/><ellipse cx="1017.2" cy="904.6" rx="3.2" ry="4.3" stroke="none"/><ellipse cx="1042.0" cy="904.6" rx="3.2" ry="4.3" stroke="none"/></g>
<g fill="#000066" stroke="#000066"><line x1="629.8" y1="858.8" x2="629.8" y2="872.8" stroke-width="1.5"/><line x1="625.3" y1="872.8" x2="634.3" y2="872.8" stroke-width="2"/><path d="M618.4 860.0 Q629.8 857.8 629.8 859.8" fill="none" stroke-width="1.3"/><path d="M639.3 860.0 Q629.8 857.8 629.8 859.8" fill="none" stroke-width="1.3"/><ellipse cx="618.4" cy="860.0" rx="2.2" ry="3.0" stroke="none"/><ellipse cx="639.3" cy="860.0" rx="2.2" ry="3.0" stroke="none"/></g>
<rect x="393.0" y="284.5" width="18.8" height="12.3" fill="#f1e9e5" fill-opacity="0.9"/><text x="402.4" y="293.3" font-family="Liberation Sans" font-size="11" fill="#000" text-anchor="middle">-3-</text>
<rect x="621.6" y="316.2" width="19.7" height="15.0" fill="#f1e9e5" fill-opacity="0.9"/><text x="631.5" y="327.7" font-family="Liberation Sans" font-size="11" fill="#000" text-anchor="middle">[6]</text>
<rect x="216.8" y="601.9" width="19.2" height="14.9" fill="#f1e9e5" fill-opacity="0.9"/><text x="226.4" y="613.3" font-family="Liberation Sans" font-size="11" fill="#000" text-anchor="middle">-4-</text>
<rect x="393.0" y="600.2" width="18.9" height="14.8" fill="#f1e9e5" fill-opacity="0.9"/><text x="402.4" y="611.5" font-family="Liberation Sans" font-size="11" fill="#f07124" text-anchor="middle">[1]</text>
<rect x="442.0" y="604.0" width="19.0" height="14.9" fill="#f1e9e5" fill-opacity="0.9"/><text x="451.5" y="615.4" font-family="Liberation Sans" font-size="11" fill="#000" text-anchor="middle">[4]</text>
<rect x="612.0" y="597.0" width="18.7" height="14.8" fill="#f1e9e5" fill-opacity="0.9"/><text x="621.4" y="608.3" font-family="Liberation Sans" font-size="11" fill="#000" text-anchor="middle">-2-</text>
<rect x="809.0" y="604.0" width="19.0" height="14.8" fill="#f1e9e5" fill-opacity="0.9"/><text x="818.5" y="615.3" font-family="Liberation Sans" font-size="11" fill="#000" text-anchor="middle">[3]</text>
<rect x="843.0" y="600.0" width="19.0" height="15.0" fill="#f1e9e5" fill-opacity="0.9"/><text x="852.5" y="611.5" font-family="Liberation Sans" font-size="11" fill="#000" text-anchor="middle">[2]</text>
<rect x="622.2" y="889.0" width="18.5" height="14.7" fill="#f1e9e5" fill-opacity="0.9"/><text x="631.5" y="900.2" font-family="Liberation Sans" font-size="11" fill="#000" text-anchor="middle">[5]</text>
<rect x="393.0" y="918.7" width="18.8" height="14.2" fill="#f1e9e5" fill-opacity="0.9"/><text x="402.4" y="929.4" font-family="Liberation Sans" font-size="11" fill="#f07124" text-anchor="middle">-1-</text>
<circle cx="45.7" cy="1072.1" r="4.7" fill="#6a6a6a"/><circle cx="44.5" cy="1070.8" r="1.6" fill="#aaa"/>
<rect x="44.3" y="1049" width="3.6" height="18" fill="#3333ff"/><polygon points="41.2,1049.7 50.7,1049.7 45.9,1033.8" fill="#3333ff"/>
<rect x="49" y="1070" width="10" height="3.7" fill="#ff1a1a"/><polygon points="58.6,1067.3 72.9,1072.1 58.6,1076.7" fill="#ff1a1a"/>
<path d="M48 1023 H54.8 L48 1031.7 H54.8" fill="none" stroke="#000" stroke-width="1"/>
<path d="M74.3 1060.3 L80.7 1068.5 M80.7 1060.3 L74.3 1068.5 M77.5 1064 V1068.5" fill="none" stroke="#000" stroke-width="1"/>
</svg><!--/VIEW-->
<div class="a" style="left:1187px;top:158px;width:27px;height:26px;background:#d6d6d6"></div>
<div class="a" style="left:1245px;top:159px;width:24px;height:24px;background:#d6d6d6"></div>
<svg class="a" style="left:1090px;top:158px" width="234" height="90" viewBox="1090 158 234 90">
<g fill="none" stroke="#1a1a1a" stroke-width="1.3">
<path d="M1105.3 163.2 V175.7 H1117.7 M1102 166.6 H1114.5 V178.5"/>
<path d="M1127 169 L1131 172.6 L1134.9 169 M1172.4 169 L1176.4 172.6 L1180.3 169" stroke-width="1.1"/>
<path d="M1153.5 165.5 Q1148 169 1147.5 174 Q1147.5 178.5 1152 178.2 M1150.5 165 H1153.8 V168.5"/>
<path d="M1157.5 163.5 Q1162.5 164 1162.3 169 Q1161.5 173.5 1157 177 M1160.2 177.2 H1156.5 V173.5"/>
<path d="M1193.1 167.9 H1203.3 V178.5 H1193.1 Z M1199 163 H1209.5 V173.5 L1203.3 178.5 M1193.1 167.9 L1199 163 M1203.3 167.9 L1209.5 163 M1193.1 178.5 L1199 173.5 H1201.5 M1199 173.5 V170.5" stroke-width="1.25"/>
<path d="M1249.3 166.7 L1254.4 168.1 L1264.6 165.6 L1259.3 164.2 Z M1249.3 166.7 V173.6 L1254.4 176.5 L1264.6 170.6 V165.6 M1254.4 168.1 V176.5" stroke-width="1.5"/>
<path d="M1276.1 169.4 L1283.4 164.3 L1290.7 169.4 M1277.8 170 V177.6 H1281.4 V172.5 H1285.6 V177.6 H1289.2 V170" stroke-width="1.1"/>
<path d="M1306.4 167.6 L1302.3 163.5 M1302 167.9 V163.2 H1306.7 M1313.4 167.6 L1317.7 163.5 M1313.3 163.2 H1318 V167.9 M1306.4 174.3 L1302.3 178.4 M1302 174.2 V178.7 H1306.7 M1313.4 174.3 L1317.7 178.4 M1318 174.2 V178.7 H1313.3" stroke-width="1.4"/>
</g>
<path d="M1220.1 169 L1226 163 H1236.2 V172.5 L1230.3 178.8 H1220.1 Z" fill="#000"/>
<path d="M1220.1 169 H1230.3 V178.8 M1230.3 169 L1236.2 163" stroke="#fff" stroke-width="0.8" fill="none"/>
<rect x="1139" y="160" width="1" height="22" fill="#aaa"/><rect x="1184" y="160" width="1" height="22" fill="#aaa"/><rect x="1241" y="160" width="1" height="22" fill="#aaa"/>
<ellipse cx="1268.7" cy="228.5" rx="39" ry="4" fill="none" stroke="#dedede" stroke-width="2.5"/>
<polygon points="1244.2,195.4 1268.7,191.5 1293.5,196 1293.5,230.3 1268.7,234.2 1244.2,230.3" fill="#b4b4b4"/>
<g fill="none" stroke="#808080" stroke-width="1.2">
<path d="M1244.2 195.4 L1268.7 191.5 L1293.5 196 L1268.7 198.3 Z M1244.2 195.4 V230.3 L1268.7 234.2 L1293.5 230.3 V196 M1268.7 191.5 V234.2 M1244.2 230.3 L1268.7 227.2 L1293.5 230.3"/>
</g>
<text x="1257" y="217" font-family="Liberation Sans" font-size="7" fill="#fff" text-anchor="middle">-Y</text>
<text x="1282" y="217" font-family="Liberation Sans" font-size="7" fill="#fff" text-anchor="middle">-X</text>
</svg>
<svg class="a" style="left:1130px;top:280px" width="190" height="370" viewBox="1130 280 190 370">
<g fill="#444"><polygon points="1142,299.5 1148,299.5 1148,293.5"/><polygon points="1162,321.5 1168,321.5 1168,315.5"/><polygon points="1162,387.5 1168,387.5 1168,381.5"/><polygon points="1162,431.5 1168,431.5 1168,425.5"/><polygon points="1182,453.5 1188,453.5 1188,447.5"/><polygon points="1182,519.5 1188,519.5 1188,513.5"/><polygon points="1162,585.5 1168,585.5 1168,579.5"/><polygon points="1182,607.5 1188,607.5 1188,601.5"/></g>
<polygon points="1195,616 1290,616 1305,626.5 1290,637 1195,637" fill="#f07124"/>
<rect x="1201" y="534" width="11" height="11" rx="1.5" fill="#e2e2e2"/><rect x="1201" y="556" width="11" height="11" rx="1.5" fill="#e2e2e2"/><rect x="1201" y="622" width="11" height="11" rx="1.5" fill="#e2e2e2"/>
<path d="M1203.5 538.5 L1206 542 L1213.5 533 M1203.5 560.5 L1206 564 L1213.5 555 M1203.5 626.5 L1206 630 L1213.5 621" fill="none" stroke="#f47d16" stroke-width="1.8"/>
</svg>
<div class="a tr trb" style="left:1161px;top:289px">DRM1</div>
<div class="a tr trb" style="left:1181px;top:311px">Members</div>
<div class="a tr" style="left:1180px;top:333px">SB1</div>
<div class="a tr" style="left:1180px;top:355px">BP1</div>
<div class="a tr trb" style="left:1181px;top:377px">Supports</div>
<div class="a tr" style="left:1180px;top:399px">SS1</div>
<div class="a tr trb" style="left:1181px;top:421px">Loads and Combin...</div>
<div class="a tr trb" style="left:1201px;top:443px">Load cases</div>
<div class="a tr" style="left:1200px;top:465px">LC1</div>
<div class="a tr" style="left:1200px;top:487px">LC2</div>
<div class="a tr trb" style="left:1201px;top:509px">ULS Combinations</div>
<div class="a tr" style="left:1223px;top:533px">C1</div>
<div class="a tr" style="left:1223px;top:555px">C2</div>
<div class="a tr trb" style="left:1181px;top:575px">Reinforcements</div>
<div class="a tr trb" style="left:1201px;top:597px">Group of Bars</div>
<div class="a tr" style="left:1223px;top:621px;color:#fff">GB3D1</div>
<div class="a" style="left:1330px;top:158px;width:589px;height:25px;background:#f07124"></div>
<div class="a" style="left:1340px;top:164px;font-size:12px;font-weight:bold;color:#fff;line-height:14px">GB3D1</div>
<div class="a" style="left:1771px;top:164px;font-size:12px;font-weight:bold;color:#fff;line-height:14px">New</div>
<div class="a" style="left:1816px;top:164px;font-size:12px;font-weight:bold;color:#fff;line-height:14px">Copy</div>
<div class="a" style="left:1865px;top:164px;font-size:12px;font-weight:bold;color:#fff;line-height:14px">Delete</div>
<div class="a" style="left:1897px;top:194px;width:10px;height:494px;background:#f0f0f0;border-radius:3px"></div><div class="a" style="left:1898px;top:194px;width:8px;height:486px;background:#d2d2d2;border-radius:3px"></div>
<div class="a" style="left:1342px;top:699px;width:567px;height:1px;background:#d8d8d8"></div>
<div class="a" style="left:1337px;top:322px;width:561px;height:370px;border:4px solid #ff0000;border-radius:13px"></div>
<svg class="a" style="left:1330px;top:190px" width="30" height="470" viewBox="1330 190 30 470">
<g fill="none" stroke="#f07124" stroke-width="1.2"><path d="M1346 201 L1350 205.2 L1354 201"/><path d="M1346 333 L1350 337.2 L1354 333"/><path d="M1346 513 L1350 517.2 L1354 513"/><path d="M1346 645 L1350 649.2 L1354 645"/></g>
</svg>
<div class="a ph" style="top:196px">Rebar properties</div>
<div class="a pl" style="top:221px">Diameter [mm]</div>
<div class="a pl" style="top:245px">Material</div>
<div class="a pl" style="top:269px">Anchorage type at the beginning</div>
<div class="a pl" style="top:293px">Anchorage type at the end</div>
<div class="a ph" style="top:328px">Shape definition</div>
<div class="a pl" style="top:353px">Definition of bar shape</div>
<div class="a pl" style="top:377px">Surface cover [mm]</div>
<div class="a pl" style="top:401px">Number of layers</div>
<div class="a pl" style="top:425px">Distance of layers [mm]</div>
<div class="a pl" style="top:449px">Number of bars in layer</div>
<div class="a pl" style="top:473px">Distance between bars [mm]</div>
<div class="a ph" style="top:508px">Surface component data</div>
<div class="a pl" style="top:532px">Master</div>
<div class="a pl" style="top:556px">Surface</div>
<div class="a pl" style="top:580px">Edge</div>
<div class="a pl" style="top:604px">Position on edge</div>
<div class="a ph" style="top:640px">Shape position</div>
<div class="a pl" style="top:665px">Edge cover type</div>
<div class="a fld" style="top:217px;width:321px">20</div>
<div class="a fld" style="top:241px;width:321px">B 500B</div>
<div class="a fld" style="top:349px;width:345px">On surface edge</div>
<div class="a fld" style="top:373px;width:345px">100</div>
<div class="a fld" style="top:397px;width:345px">3</div>
<div class="a fld" style="top:421px;width:345px">150</div>
<div class="a fld" style="top:445px;width:345px">4</div>
<div class="a fld" style="top:469px;width:345px">200</div>
<div class="a fld" style="top:529px;width:345px">SB1</div>
<div class="a fld" style="top:553px;width:345px">1</div>
<div class="a fld" style="top:577px;width:345px">1</div>
<div class="a fld" style="top:661px;width:345px">From Settings</div>
<svg class="a" style="left:1540px;top:210px" width="360" height="480" viewBox="1540 210 360 480">
<g fill="none" stroke="#333" stroke-width="1.2">
<path d="M1855 248.5 L1859 252.5 L1863 248.5"/>
<path d="M1878.5 226.5 L1882.8 222.5 L1887 226.5 M1878.5 230 L1882.8 234 L1887 230"/>
<path d="M1882.8 245 V255 M1877.8 250 H1887.8" stroke-width="1.3"/>
<path d="M1878.8 356.5 L1882.8 360.5 L1886.8 356.5 M1878.8 536.5 L1882.8 540.5 L1886.8 536.5 M1878.8 560.5 L1882.8 564.5 L1886.8 560.5 M1878.8 584.5 L1882.8 588.5 L1886.8 584.5 M1878.8 668.5 L1882.8 672.5 L1886.8 668.5"/>
</g>
<g id="anc">
<rect x="1548.5" y="265.5" width="21" height="19" fill="#fff" stroke="#ababab"/>
<rect x="1570.5" y="265.5" width="21" height="19" fill="#fff" stroke="#ababab"/>
<rect x="1592.5" y="265.5" width="21" height="19" fill="#fff" stroke="#ababab"/>
<rect x="1614.5" y="265.5" width="21" height="19" fill="#fff" stroke="#ababab"/>
<rect x="1636.5" y="265.5" width="21" height="19" fill="#fff" stroke="#ababab"/>
<rect x="1658" y="265" width="22" height="20" fill="#f07124"/>
<rect x="1680.5" y="265.5" width="21" height="19" fill="#fff" stroke="#ababab"/>
<g fill="none" stroke="#000" stroke-width="2.3">
<path d="M1551.5 279 H1566.8"/>
<path d="M1573.5 273.5 Q1573.5 279 1580 279 H1588.8"/>
<path d="M1601.8 272.2 L1597.5 275.5 Q1595.8 279 1599.5 279 H1610.8"/>
<path d="M1633 272.8 H1622 Q1618.5 272.8 1618.5 275.9 Q1618.5 279 1622 279 H1633"/>
<path d="M1639.2 279 H1654.8 M1648.7 276 V279"/>
<path d="M1662 274.5 H1672" stroke-width="3"/>
<path d="M1683.3 274.5 H1692" stroke-width="2"/>
</g>
<circle cx="1648.7" cy="275.8" r="1.9" fill="#000"/>
<path d="M1670 274.5 L1674.8 268.2 V281 Z" fill="#000"/>
<path d="M1698.8 270.3 H1692 V279.5 H1698.8" fill="#d8d8d8" stroke="#000" stroke-width="1.6"/>
</g>
<use href="#anc" y="24"/>
<rect x="1548" y="601" width="44.5" height="20" fill="#f07124"/>
<rect x="1592.5" y="601.5" width="43" height="19" fill="#fff" stroke="#ababab"/>
<rect x="1636.5" y="601.5" width="43" height="19" fill="#fff" stroke="#ababab"/>
<rect x="1680.5" y="601.5" width="43" height="19" fill="#fff" stroke="#ababab"/>
<g fill="none" stroke="#000" stroke-width="1.8">
<rect x="1555.3" y="605.3" width="26.2" height="12.4" fill="#fff"/>
<rect x="1599.3" y="605.3" width="26.4" height="12.4"/>
<rect x="1643.3" y="605.3" width="26.5" height="12.4"/>
<path d="M1713.3 605.3 H1687.3 V612.5 H1693.5 V617.7 H1713.3"/>
</g>
<g stroke="#222" stroke-width="2.2" stroke-linecap="round"><path d="M1558 614.5 H1579.2 M1601.7 614.5 H1611.5 M1657.5 614.5 H1667.2 M1690.2 608.3 H1712.5"/></g>
<path d="M1713.8 605 V618.5 M1711 612 H1717.5" stroke="#ff1a1a" stroke-width="1.3"/>
</svg>
<svg class="a" style="left:1330px;top:705px" width="589" height="414" viewBox="1330 705 589 414">
<g fill="none" stroke="#333" stroke-width="1.6">
<rect x="1382.7" y="729.9" width="486.3" height="130.4"/>
<path d="M1382.5 925.7 H1599.6 V985.3 L1612.8 990.3 L1587.2 995.4 L1599.6 1000.5 V1056 H1382.5 Z"/>
<path d="M1652.5 925.7 H1869 V1056 H1652.5 V1000.4 L1639.2 995.3 L1665.2 990.2 L1652.5 985.3 Z"/>
</g>
<g fill="none" stroke="#f4a06c" stroke-width="4.2">
<path d="M1478 826.9 L1800 776.4"/>
<path d="M1463.1 1026.8 H1575.4 V949.7"/>
<path d="M1652.5 1024.5 H1837"/>
</g>
<g fill="none" stroke="#999" stroke-width="1.2">
<path d="M1441.6 825.6 H1468 M1448.7 825.6 V860.3 M1441.6 860.3 H1468 M1442.5 819.5 L1455 832 M1442.5 854 L1455.5 866.5"/>
<path d="M1805 776.4 H1832 M1824.7 776.4 V860.3 M1805 860.3 H1832 M1818.5 770 L1831 782.5 M1818.5 854 L1831 866.5"/>
<path d="M1382.7 877.5 V901 M1474.6 877.5 V901 M1382.7 897.9 H1474.6 M1376.7 903.5 L1388.7 892.3 M1468.6 903.5 L1480.6 892.3"/>
<path d="M1796.7 877.5 V901 M1869 877.5 V901 M1796.7 897.9 H1869 M1790.7 903.5 L1802.7 892.3 M1863 903.5 L1875 892.3"/>
<path d="M1416.6 1026 H1443 M1423.9 1026 V1056 M1416.6 1056 H1443 M1417.5 1020 L1430 1032 M1417.5 1050 L1430 1062"/>
<path d="M1382.5 1070 V1095 M1462.2 1070 V1095 M1382.5 1091.2 H1462.2 M1376.5 1097 L1388.5 1085.5 M1456.2 1097 L1468.2 1085.5"/>
<path d="M1795 1024.5 H1821.6 M1802.4 1024.5 V1056 M1795 1056 H1821.6 M1796.4 1018.5 L1808.4 1030.5 M1796.4 1050 L1808.4 1062"/>
<path d="M1800.6 1091.1 H1869 M1833.4 1070 V1095 M1869 1070 V1095 M1827.4 1097 L1839.4 1085.5 M1863 1097 L1875 1085.5"/>
</g>
<g fill="none" stroke="#777" stroke-width="1.1">
<circle cx="1382.7" cy="729.9" r="3.8"/><circle cx="1382.7" cy="795.9" r="3.8"/><circle cx="1628.2" cy="729.9" r="3.8"/><circle cx="1628.2" cy="795.9" r="3.8"/><circle cx="1628.2" cy="860.3" r="3.8"/><circle cx="1869" cy="729.9" r="3.8"/><circle cx="1869" cy="795.9" r="3.8"/>
<circle cx="1382.5" cy="925.7" r="3.8"/><circle cx="1382.5" cy="991.4" r="3.8"/>
</g>
<g fill="#f4a06c"><circle cx="1382.7" cy="860.3" r="4.5"/><circle cx="1869" cy="860.3" r="4.5"/><circle cx="1382.5" cy="1056" r="4.5"/>
<path d="M1735 1065 H1784" stroke="#f4a06c" stroke-width="1.3"/><path d="M1769.6 1060 Q1778 1064 1789.6 1065 Q1778 1066 1769.6 1071 Q1773 1065 1769.6 1060 Z"/></g>
<g font-family="Liberation Sans" font-size="24" fill="#111">
<text x="1360.5" y="749">4</text><text x="1360.5" y="824">8</text><text x="1634" y="756.5">7</text><text x="1634" y="888.5">5</text>
<text x="1881.5" y="752">3</text><text x="1881.5" y="820.7">6</text>
<text x="1635" y="819" textLength="51" lengthAdjust="spacingAndGlyphs">0=9</text>
<text x="1420" y="848.7">Z</text><text x="1418.5" y="890.8">X</text><text x="1829.5" y="826.4">Z</text><text x="1823" y="890.8">X</text>
<text x="1360.5" y="949.7">4</text><text x="1360.5" y="1020">8</text>
<text x="1391" y="1046.5">Z</text><text x="1411" y="1083.9">X</text>
<text x="1757.5" y="918.3">T</text><text x="1881.5" y="1000.8">R</text>
<text x="1780" y="1045.5">c</text><text x="1809.5" y="1084.7">c</text>
</g>
<g font-family="Liberation Sans" font-size="15" fill="#111">
<text x="1436.5" y="853.7">1</text><text x="1435.5" y="895.8">1</text><text x="1844.5" y="831.4">2</text><text x="1838" y="896">2</text>
<text x="1408" y="1052">1</text><text x="1429" y="1089">1</text>
</g>
<g font-family="Liberation Sans" font-size="24" fill="#f4a06c">
<text x="1359" y="883.4">1</text><text x="1881.5" y="884.2">2</text><text x="1359" y="1079.3">1</text><text x="1756.5" y="1093.8">B</text>
</g>
</svg>
<div class="a" style="left:18px;top:1131px;font-size:12px;font-weight:bold;color:#a3a3a3;line-height:14px;white-space:nowrap;letter-spacing:-0.5px">Design Code: <span style="color:#fff">EN</span></div>
<div class="a" style="left:138px;top:1131px;font-size:12px;font-weight:bold;color:#a3a3a3;line-height:14px;white-space:nowrap;letter-spacing:-0.2px">Rounding: <span style="color:#fff">Metric</span></div>
<div class="a" style="left:264px;top:1131px;font-size:12px;font-weight:bold;color:#a3a3a3;line-height:14px;white-space:nowrap;letter-spacing:-0.2px">Presentation Units: <span style="color:#fff">Metric</span></div>
<div class="a" style="left:1794px;top:1131px;font-size:12.5px;color:#f07124;line-height:14px;white-space:nowrap;letter-spacing:-0.2px">www.<span style="color:#fff">ideastatica</span> .com</div>
</body></html>
